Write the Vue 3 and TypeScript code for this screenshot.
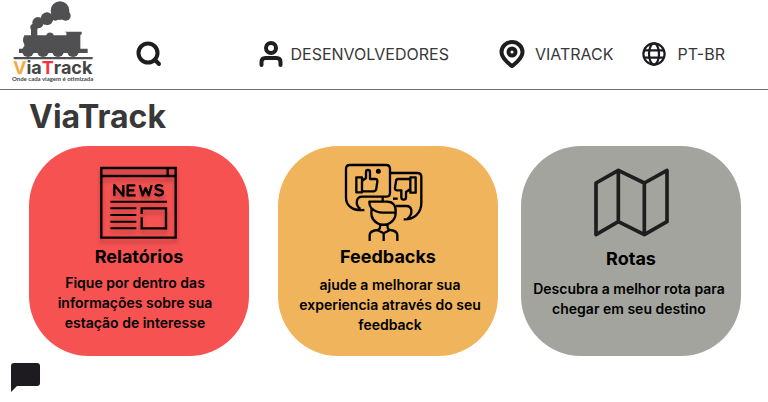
<script setup lang="ts">
interface Card {
  id: 'news' | 'feedback' | 'routes'
  title: string
  lines: string[]
}

const cards: Card[] = [
  { id: 'news', title: 'Relatórios', lines: ['Fique por dentro das', 'informações sobre sua', 'estação de interesse'] },
  { id: 'feedback', title: 'Feedbacks', lines: ['ajude a melhorar sua', 'experiencia através do seu', 'feedback'] },
  { id: 'routes', title: 'Rotas', lines: ['Descubra a melhor rota para', 'chegar em seu destino'] },
]
</script>

<template>
  <div class="page">
    <header class="header">
      <a class="logo" href="#" aria-label="ViaTrack">
        <svg width="110" height="89" viewBox="0 0 330 267">
          <g fill="#505052">
            <circle cx="180" cy="32" r="28" />
            <circle cx="197" cy="47" r="15" />
            <circle cx="166" cy="48" r="14" />
            <circle cx="141" cy="56" r="19" />
            <circle cx="114" cy="68" r="17" />
            <circle cx="102" cy="82" r="11" />
            <path d="M93 82h19v24h27c2-11 20-11 22 0h38v-9h-4V95h50v8l-4 2v41h22v13H57v-13h16v-12q-8-12 0-28h20z" />
            <circle cx="84" cy="153" r="18" />
            <circle cx="129" cy="153" r="18" />
            <circle cx="174" cy="153" r="18" />
            <circle cx="219" cy="153" r="18" />
            <path d="M41 171h237v7H41z" />
          </g>
          <text class="logo-name" x="39" y="222"><tspan fill="#f4ad45">V</tspan>ia<tspan fill="#f8323d">T</tspan>rack</text>
          <text class="logo-tag" x="36" y="242">Onde cada viagem é otimizada</text>
        </svg>
      </a>
      <button class="search" type="button" aria-label="Buscar">
        <svg width="26" height="26" viewBox="0 0 26 26" fill="none" stroke="#1e1e1e" stroke-width="4" stroke-linecap="round">
          <circle cx="12" cy="12" r="9.5" />
          <path d="M19 19l4 4" />
        </svg>
      </button>
      <nav class="nav">
        <a class="link developers" href="#">
          <svg width="24" height="26" viewBox="0 0 24 26" fill="none" stroke="#1e1e1e" stroke-width="4" stroke-linecap="round">
            <circle cx="12" cy="7" r="5" />
            <path d="M2.5 24v-3q0-4 4-4h11q4 0 4 4v3" />
          </svg>
          DESENVOLVEDORES
        </a>
        <a class="link place" href="#">
          <svg width="26" height="28" viewBox="0 0 26 28" fill="none" stroke="#1e1e1e" stroke-width="4">
            <path d="M23.5 12C23.5 19 13 26 13 26S2.500 19 2.500 12a10.500 10 0 0 1 21 0z" />
            <circle cx="13" cy="12" r="3.500" />
          </svg>
          VIATRACK
        </a>
        <button class="link language" type="button">
          <svg width="24" height="24" viewBox="0 0 24 24" fill="none" stroke="#1d1b20" stroke-width="2.200">
            <circle cx="12" cy="12" r="10.600" />
            <ellipse cx="12" cy="12" rx="5" ry="10.600" />
            <path d="M2 8.300h20M2 15.700h20" />
          </svg>
          PT-BR
        </button>
      </nav>
    </header>

    <main>
      <h1>ViaTrack</h1>
      <div class="cards">
        <a v-for="card in cards" :key="card.id" class="card" :class="card.id" href="#">
          <svg v-if="card.id === 'news'" class="art shadow" viewBox="15 12 264 252" fill="none" stroke="#000" stroke-width="7">
            <path d="M34 30h223v209H34zM34 54h223M233 30v24" />
            <path d="M61 131h170M61 151h78M61 171h78M61 191h78M61 211h78" stroke-width="6" />
            <path d="M155 168v-17h73v60h-73v-33" />
            <path d="M73 113V81l27 32V81M136 82h-23v30h24M113 97h20M149 81l9 31 9-22 9 22 9-31M219 85c-8-6-23-5-22 4 1 10 23 4 22 15-1 10-18 10-25 3" stroke-linejoin="round" />
          </svg>
          <svg v-else-if="card.id === 'feedback'" class="art" viewBox="27 21 264 252" fill="none" stroke="#000" stroke-width="7" stroke-linejoin="round">
            <path d="M88 165C53 169 33 151 33 128V42q0-12 12-12h108q12 0 12 12v71q0 12-12 12H82c-20 0-22 25-6 37" />
            <path d="M166 54h81q12 0 12 12v78c0 30-22 50-53 49M183 153h31c19 0 20 25 4 38M143 126v14" />
            <path d="M64 67h17v45H64zM81 78l12-9V51q0-6 6-6t6 6v21h16q7 0 6 8l-3 21q-1 8-9 8H81" />
            <path d="M226 67h16v46h-16zM226 72h-36q-7 0-7 7l-3 19q-1 8 7 8h12v21q0 7 7 7t7-7v-16l13-9" />
            <circle cx="130" cy="49" r="4" fill="#000" />
            <path d="M174 131h14" />
            <path d="M109 160q-7-10-6-20h53c20 0 27 13 26 33q0 20-17 31c-10 7-29 7-39 0-19-13-18-28-16-43M110 160q12 13 34 13h37M135 207q3 16-8 18-23 3-23 15v18M158 207q-3 16 8 18 21 3 21 15v18M126 224l20 11 20-11M146 235v23" />
          </svg>
          <svg v-else class="art" viewBox="21 12 264 252" fill="none" stroke="#1e1e1e" stroke-width="11" stroke-linejoin="round">
            <path d="M48 75l67-38 78 38 68-38v154l-68 39-78-39-67 39zM115 37v154M193 75v155" />
          </svg>
          <h2>{{ card.title }}</h2>
          <p><span v-for="line in card.lines" :key="line">{{ line }}</span></p>
        </a>
      </div>
    </main>

    <footer class="footer">
      <button class="chat" type="button" aria-label="Abrir chat">
        <svg width="30" height="30" viewBox="0 0 30 30" fill="#1d1b20">
          <path d="M3 0h23q3 0 3 3v17q0 3-3 3H6l-6 6V3q0-3 3-3z" />
        </svg>
      </button>
    </footer>
  </div>
</template>

<style>
body {
  background: #fff;
}
</style>

<style scoped>
.page {
  font-family: Inter, "Liberation Sans", sans-serif;
  color: #383838;
}
a {
  color: inherit;
  text-decoration: none;
}
button {
  padding: 0;
  border: 0;
  background: none;
  color: inherit;
  font: inherit;
  cursor: pointer;
}
svg {
  display: block;
  flex: none;
}
.header {
  display: flex;
  align-items: flex-start;
  padding-right: 43px;
  border-bottom: 1px solid #707070;
}
.logo-name {
  font-size: 54px;
  font-weight: 700;
  fill: #444446;
}
.logo-tag {
  font-family: Lato, sans-serif;
  font-size: 18px;
  font-weight: 700;
  fill: #444446;
}
.search {
  margin: 41px auto 0 26px;
}
.nav {
  display: flex;
  align-items: center;
  height: 28px;
  margin-top: 40px;
}
.link {
  display: flex;
  align-items: center;
  gap: 10px;
  font-size: 16px;
  line-height: 28px;
  white-space: nowrap;
}
.developers {
  gap: 8px;
}
.place {
  margin-left: 50px;
}
.language {
  gap: 12px;
  margin-left: 28px;
}
h1 {
  margin: 0 29px 2px;
  font-size: 32px;
  line-height: 54px;
  font-weight: 700;
}
.cards {
  display: flex;
  padding: 0 27px 0 29px;
}
.card {
  box-sizing: border-box;
  flex: 1 1 0;
  min-height: 210px;
  padding: 16px 0;
  border-radius: 60px;
  color: #000;
  text-align: center;
}
.news {
  background: #f75252;
}
.feedback {
  margin: 0 23px 0 29px;
  background: #efb45c;
}
.routes {
  background: #a3a49e;
}
.art {
  width: 88px;
  height: 84px;
  margin: 0 auto;
}
.shadow {
  filter: drop-shadow(0 4px 2px rgba(0, 0, 0, 0.25));
}
h2 {
  margin: 1px 0 6px;
  font-size: 18px;
  line-height: 20px;
  font-weight: 700;
}
p {
  margin: 0;
  font-size: 14px;
  line-height: 20px;
  font-weight: 600;
}
p span {
  display: block;
}
.news p {
  padding-right: 8px;
}
.feedback h2 {
  margin-bottom: 8px;
}
.feedback p {
  padding-left: 4px;
}
.routes h2 {
  margin: 3px 0 10px;
}
.routes p {
  padding-right: 4px;
}
.footer {
  padding: 7px 11px;
}
.chat {
  display: block;
}
</style>
